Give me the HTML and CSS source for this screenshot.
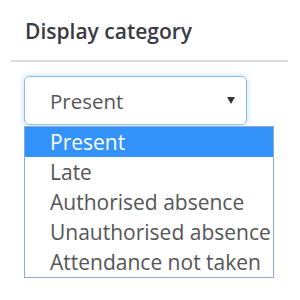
FILE: index.html
```html
<!DOCTYPE html>
<html lang="en">
  <head>
    <meta charset="UTF-8" />
    <link rel="stylesheet" href="styles.css">
    <title>Display category</title>
  </head>
  <body>
    <div class="panel">
      <div class="panel-heading">Display category</div>
      <div class="field">
        <div class="select">
          <span>Present</span>
          <span class="caret"></span>
        </div>
        <ul class="options">
          <li class="active">Present</li>
          <li>Late</li>
          <li>Authorised absence</li>
          <li>Unauthorised absence</li>
          <li>Attendance not taken</li>
        </ul>
      </div>
    </div>
  </body>
</html>
```

FILE: styles.css
```css
* {
  box-sizing: border-box;
}

body {
  margin: 0;
  background-color: #fff;
  font-family: "Open Sans", Arial, sans-serif;
  color: #555;
}

.panel {
  width: 300px;
  height: 300px;
}

.panel-heading {
  margin: 0 12px 0 11px;
  padding: 17px 14px 0 14px;
  height: 62px;
  border-bottom: 2px solid #dcdcdc;
  font-size: 21px;
  font-weight: 600;
  color: #3a3a44;
}

.field {
  padding: 14px 0 0 24px;
}

.select {
  display: flex;
  align-items: center;
  justify-content: space-between;
  width: 223px;
  height: 49px;
  padding: 0 11px 0 25px;
  border: 1px solid #8cbcf0;
  border-radius: 5px;
  box-shadow: 0 0 6px rgba(102, 175, 233, 0.45);
  font-size: 20.5px;
  color: #555;
}

.caret {
  width: 0;
  height: 0;
  border-left: 4px solid transparent;
  border-right: 4px solid transparent;
  border-top: 7px solid #333;
}

.options {
  list-style: none;
  margin: 1px 0 0 0;
  padding: 0;
  width: 250px;
  border: 1px solid #8da8d6;
}

.options li {
  height: 30px;
  line-height: 30px;
  padding-left: 25px;
  font-size: 21px;
  color: #555;
  white-space: nowrap;
}

.options li.active {
  background-color: #3393fb;
  color: #fff;
}
```
